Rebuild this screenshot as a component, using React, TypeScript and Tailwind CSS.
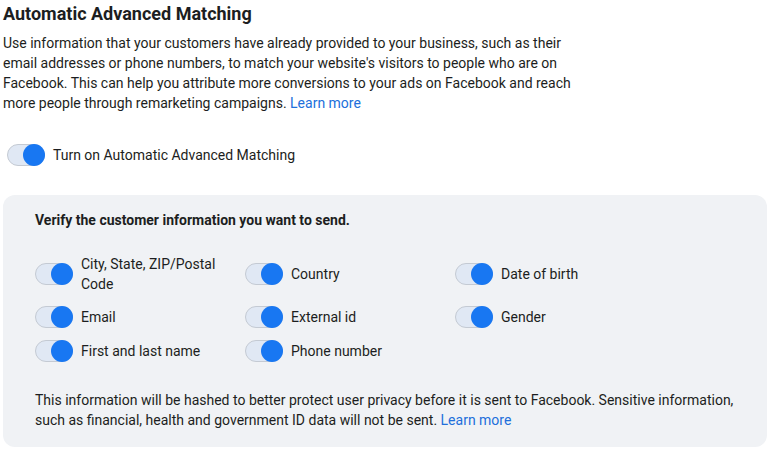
import React from 'react';

const Toggle: React.FC = () => (
  <span className="relative inline-flex h-[22px] w-[38px] shrink-0 items-center rounded-full border border-[#c4cad3] bg-[#e0e8f4]">
    <span className="absolute right-[-1px] top-[-1px] h-[22px] w-[22px] rounded-full bg-[#1877f2]" />
  </span>
);

const fields = [
  'City, State, ZIP/Postal Code',
  'Country',
  'Date of birth',
  'Email',
  'External id',
  'Gender',
  'First and last name',
  'Phone number',
];

export default function App() {
  return (
    <div
      className="w-[772px] h-[463px] bg-white px-[3px] pt-[2px] text-[#1c1e21]"
      style={{ fontFamily: 'Roboto, "Liberation Sans", sans-serif' }}
    >
      <h2 className="text-[18px] font-bold leading-6">Automatic Advanced Matching</h2>
      <p className="mt-[7px] w-[580px] text-[14px] leading-5">
        Use information that your customers have already provided to your business, such as their email addresses or
        phone numbers, to match your website's visitors to people who are on Facebook. This can help you attribute more
        conversions to your ads on Facebook and reach more people through remarketing campaigns.{' '}
        <a className="text-[#216fdb]">Learn more</a>
      </p>

      <div className="mt-[31px] ml-1 flex items-center gap-2 text-[14px]">
        <Toggle />
        <span>Turn on Automatic Advanced Matching</span>
      </div>

      <div className="mt-[29px] w-[764px] rounded-xl bg-[#f0f2f5] pl-8 pr-6 pt-[15px] pb-[17px] text-[14px] leading-5">
        <div className="font-bold">Verify the customer information you want to send.</div>
        <div className="mt-[24px] grid grid-cols-[210px_210px_210px] gap-y-3">
          {fields.map((f) => (
            <div key={f} className="flex items-center gap-2">
              <Toggle />
              <span className="w-[140px]">{f}</span>
            </div>
          ))}
        </div>
        <p className="mt-[28px]">
          This information will be hashed to better protect user privacy before it is sent to Facebook. Sensitive
          information, such as financial, health and government ID data will not be sent.{' '}
          <a className="text-[#216fdb]">Learn more</a>
        </p>
      </div>
    </div>
  );
}
